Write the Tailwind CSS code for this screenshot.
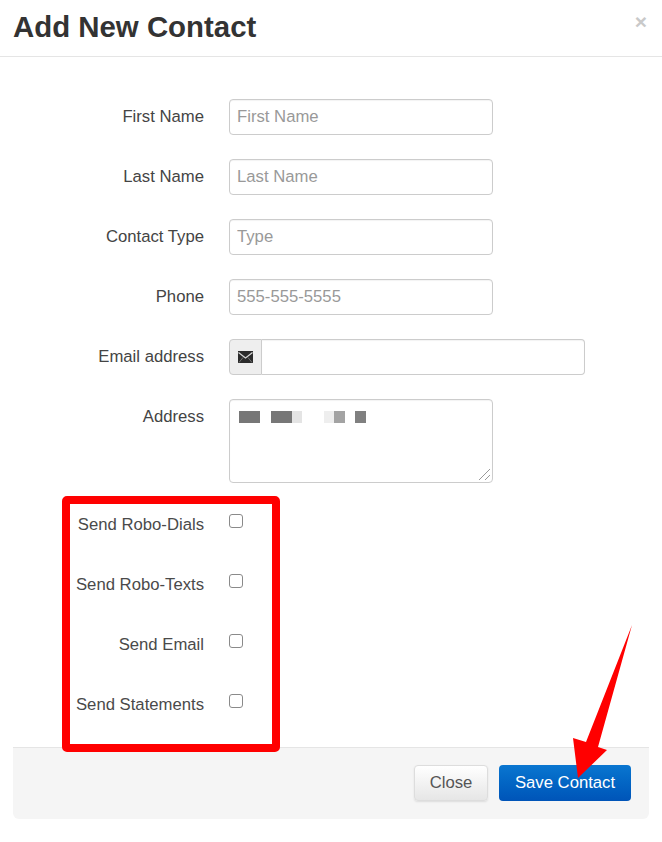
<!DOCTYPE html>
<html lang="en">
<head>
    <meta charset="UTF-8">
    <meta name="viewport" content="width=device-width, initial-scale=1.0">
    <title>Add New Contact</title>
    <script src="https://cdn.jsdelivr.net/npm/@tailwindcss/browser@4"></script>
</head>
<body class="bg-white text-[#333] font-['Liberation_Sans',Arial,sans-serif] text-[16.7px] overflow-hidden">
<div class="relative h-[842px] w-[662px]">

    <!-- Header -->
    <header class="h-[57px] border-b border-[#e5e5e5] pl-[13px] pr-[15px] flex justify-between">
        <h1 class="text-[29.4px] leading-[54px] font-bold text-[#333]">Add New Contact</h1>
        <span class="text-[21px] leading-[44px] font-bold text-[#c9c9c9]">×</span>
    </header>

    <!-- Form -->
    <form class="pt-[42px] flex flex-col gap-[24px]">
        <div class="flex h-[36px]">
            <label class="w-[204px] text-right leading-[36px] text-[#444]">First Name</label>
            <input type="text" placeholder="First Name" class="ml-[25px] w-[264px] h-[36px] px-[7px] border border-[#ccc] rounded-[4px] outline-none placeholder:text-[#999] shadow-[inset_0_1px_1px_rgba(0,0,0,0.05)]">
        </div>
        <div class="flex h-[36px]">
            <label class="w-[204px] text-right leading-[36px] text-[#444]">Last Name</label>
            <input type="text" placeholder="Last Name" class="ml-[25px] w-[264px] h-[36px] px-[7px] border border-[#ccc] rounded-[4px] outline-none placeholder:text-[#999] shadow-[inset_0_1px_1px_rgba(0,0,0,0.05)]">
        </div>
        <div class="flex h-[36px]">
            <label class="w-[204px] text-right leading-[36px] text-[#444]">Contact Type</label>
            <input type="text" placeholder="Type" class="ml-[25px] w-[264px] h-[36px] px-[7px] border border-[#ccc] rounded-[4px] outline-none placeholder:text-[#999] shadow-[inset_0_1px_1px_rgba(0,0,0,0.05)]">
        </div>
        <div class="flex h-[36px]">
            <label class="w-[204px] text-right leading-[36px] text-[#444]">Phone</label>
            <input type="text" placeholder="555-555-5555" class="ml-[25px] w-[264px] h-[36px] px-[7px] border border-[#ccc] rounded-[4px] outline-none placeholder:text-[#999] shadow-[inset_0_1px_1px_rgba(0,0,0,0.05)]">
        </div>
        <div class="flex h-[36px]">
            <label class="w-[204px] text-right leading-[36px] text-[#444]">Email address</label>
            <div class="ml-[25px] w-[356px] h-[36px] flex">
                <span class="w-[33px] flex items-center justify-center bg-[#eee] border border-[#ccc] rounded-l-[4px]">
                    <svg width="15" height="12" viewBox="0 0 15 12">
                        <rect width="15" height="12" fill="#2b2b2b"/>
                        <path d="M0.5 1.5 L7.5 7 L14.5 1.5" fill="none" stroke="#d8d8d8" stroke-width="1.2"/>
                        <path d="M1 11.5 L5 6.5 M14 11.5 L10 6.5" fill="none" stroke="#888" stroke-width="0.8"/>
                    </svg>
                </span>
                <input type="text" class="flex-1 min-w-0 border border-l-0 border-[#ccc] rounded-r-[4px] px-[7px] outline-none shadow-[inset_0_1px_1px_rgba(0,0,0,0.05)]">
            </div>
        </div>
        <div class="flex h-[84px]">
            <label class="w-[204px] text-right leading-[36px] text-[#444]">Address</label>
            <div class="relative ml-[25px] w-[264px] h-[84px]">
                <textarea class="block w-full h-full resize-none border border-[#ccc] rounded-[4px] outline-none shadow-[inset_0_1px_1px_rgba(0,0,0,0.05)]"></textarea>
                <!-- blurred out address -->
                <div class="absolute left-[10px] top-[12px] h-[12px] flex">
                    <span class="w-[21px] bg-[#777]"></span>
                    <span class="ml-[11px] w-[21px] bg-[#777]"></span>
                    <span class="w-[10px] bg-[#e4e4e4]"></span>
                    <span class="ml-[22px] w-[10px] bg-[#eee]"></span>
                    <span class="w-[11px] bg-[#a3a3a3]"></span>
                    <span class="ml-[10px] w-[11px] bg-[#808080]"></span>
                </div>
                <!-- resize grip -->
                <svg class="absolute right-[2px] bottom-[2px]" width="13" height="13" viewBox="0 0 13 13">
                    <path d="M1 12 L12 1 M7 12 L12 7" fill="none" stroke="#999" stroke-width="1"/>
                </svg>
            </div>
        </div>

        <div class="flex h-[36px] -mt-[1px]">
            <label class="w-[204px] text-right leading-[38px] text-[#4a4a4a]">Send Robo-Dials</label>
            <input type="checkbox" class="ml-[25px] mt-[8px] w-[14px] h-[14px] appearance-none bg-white border border-[#8a8a8a] rounded-[3px]">
        </div>
        <div class="flex h-[36px]">
            <label class="w-[204px] text-right leading-[38px] text-[#4a4a4a]">Send Robo-Texts</label>
            <input type="checkbox" class="ml-[25px] mt-[8px] w-[14px] h-[14px] appearance-none bg-white border border-[#8a8a8a] rounded-[3px]">
        </div>
        <div class="flex h-[36px]">
            <label class="w-[204px] text-right leading-[38px] text-[#4a4a4a]">Send Email</label>
            <input type="checkbox" class="ml-[25px] mt-[8px] w-[14px] h-[14px] appearance-none bg-white border border-[#8a8a8a] rounded-[3px]">
        </div>
        <div class="flex h-[36px]">
            <label class="w-[204px] text-right leading-[38px] text-[#4a4a4a]">Send Statements</label>
            <input type="checkbox" class="ml-[25px] mt-[8px] w-[14px] h-[14px] appearance-none bg-white border border-[#8a8a8a] rounded-[3px]">
        </div>
    </form>

    <!-- Footer -->
    <footer class="mt-[25px] ml-[13px] w-[636px] h-[72px] bg-[#f5f5f5] border-t border-[#e5e5e5] rounded-b-[6px] flex justify-end gap-[11px] pt-[17px] pr-[18px]">
        <button class="w-[74px] h-[36px] text-[#555] border border-[#ddd] rounded-[4px] bg-gradient-to-b from-white to-[#e6e6e6] shadow-[0_1px_2px_rgba(0,0,0,0.1)]">Close</button>
        <button class="w-[132px] h-[36px] text-white rounded-[4px] bg-gradient-to-b from-[#0a76d0] to-[#0054b8]">Save Contact</button>
    </footer>

    <!-- Annotations on top of the screenshot -->
    <div class="absolute left-[62px] top-[496px] w-[218px] h-[256px] border-[8px] border-[#ff0000] rounded-[5px] pointer-events-none"></div>
    <svg class="absolute left-0 top-0 pointer-events-none" width="662" height="842" viewBox="0 0 662 842">
        <polygon fill="#ff0000" points="632,625 598,747 607,750 578,778 573,738 586,742"/>
    </svg>
</div>
</body>
</html>
